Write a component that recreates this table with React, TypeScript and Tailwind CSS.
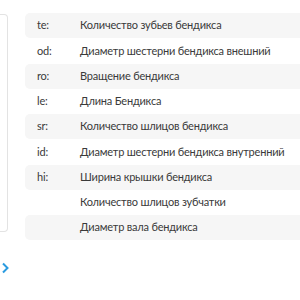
const rows = [
  { k: "te:", v: "Количество зубьев бендикса" },
  { k: "od:", v: "Диаметр шестерни бендикса внешний" },
  { k: "ro:", v: "Вращение бендикса" },
  { k: "le:", v: "Длина Бендикса" },
  { k: "sr:", v: "Количество шлицов бендикса" },
  { k: "id:", v: "Диаметр шестерни бендикса внутренний" },
  { k: "hi:", v: "Ширина крышки бендикса" },
  { k: "", v: "Количество шлицов зубчатки" },
  { k: "", v: "Диаметр вала бендикса" },
];

export default function App() {
  return (
    <div className="w-[300px] h-[300px] overflow-hidden bg-white relative font-['Lato','Noto_Sans',sans-serif] text-[11px] tracking-[-0.2px] text-[#3a3a3a]">
      <div className="flex pt-[13px]">
        <div className="w-[8px] h-[218px] shrink-0 border border-l-0 border-[#e3e3e3] rounded-r-[4px] mt-px" />
        <div className="ml-[17px] w-[300px] shrink-0 flex flex-col">
          {rows.map((r, i) => (
            <div
              key={i}
              className={`flex items-center h-[25.25px] rounded-[5px] ${i % 2 === 0 ? "bg-[#f6f6f6]" : ""}`}
            >
              <span className="w-[55px] pl-[12px] shrink-0">{r.k}</span>
              <span className="whitespace-nowrap">{r.v}</span>
            </div>
          ))}
        </div>
      </div>
      <div className="mt-[22px] pl-[1px]">
        <svg width="9" height="12" viewBox="0 0 9 12" fill="none">
          <path d="M2 1.5 L6.5 6 L2 10.5" stroke="#2a9be0" strokeWidth="2" />
        </svg>
      </div>
    </div>
  );
}
